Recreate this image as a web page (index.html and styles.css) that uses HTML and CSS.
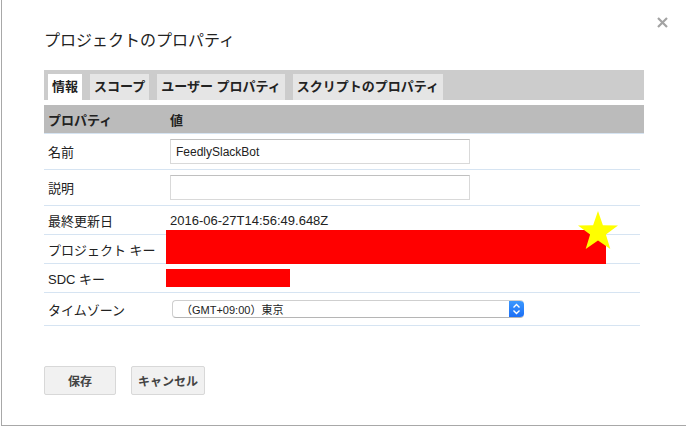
FILE: index.html
```html
<!DOCTYPE html>
<html lang="ja">
<head>
<meta charset="utf-8">
<link rel="stylesheet" href="styles.css">
</head>
<body>
<div class="dialog">
  <button class="close" aria-label="閉じる">
    <svg width="11" height="11" viewBox="0 0 11 11"><path d="M1 1L10 10M10 1L1 10" stroke="#a3a3a3" stroke-width="2.2"/></svg>
  </button>
  <h1 class="title">プロジェクトのプロパティ</h1>
  <div class="tabs">
    <div class="tab active">情報</div>
    <div class="tab">スコープ</div>
    <div class="tab">ユーザー プロパティ</div>
    <div class="tab">スクリプトのプロパティ</div>
  </div>
  <div class="table">
    <div class="head">
      <div class="label">プロパティ</div>
      <div class="value">値</div>
    </div>
    <div class="row tall">
      <div class="label">名前</div>
      <div class="value"><input class="field" type="text" value="FeedlySlackBot"></div>
    </div>
    <div class="row tall">
      <div class="label">説明</div>
      <div class="value"><input class="field" type="text" value=""></div>
    </div>
    <div class="row">
      <div class="label">最終更新日</div>
      <div class="value">2016-06-27T14:56:49.648Z</div>
    </div>
    <div class="row key-row">
      <div class="label">プロジェクト キー</div>
      <div class="value"></div>
      <div class="redact-key"></div>
      <svg class="star" width="42" height="40" viewBox="0 0 42 40"><polygon fill="#ffff00" points="21,0 25.9,14.3 41,14.5 28.9,23.6 33.3,38 21,29.4 8.7,38 13.1,23.6 1,14.5 16.1,14.3"/></svg>
    </div>
    <div class="row">
      <div class="label">SDC キー</div>
      <div class="value"><div class="redact-sdc"></div></div>
    </div>
    <div class="row tz">
      <div class="label">タイムゾーン</div>
      <div class="value">
        <div class="select">
          <span class="select-text">（GMT+09:00）東京</span>
          <span class="stepper">
            <svg width="9" height="12" viewBox="0 0 9 12"><path d="M1.5 4.5L4.5 1.5L7.5 4.5M1.5 7.5L4.5 10.5L7.5 7.5" fill="none" stroke="#fff" stroke-width="1.4"/></svg>
          </span>
        </div>
      </div>
    </div>
  </div>
  <div class="buttons">
    <button class="btn save">保存</button>
    <button class="btn cancel">キャンセル</button>
  </div>
</div>
</body>
</html>
```

FILE: styles.css
```css
html, body {
  margin: 0;
  padding: 0;
  background: #fff;
}
body {
  font-family: "Liberation Sans", "Noto Sans CJK JP", sans-serif;
  color: #222;
  width: 686px;
  height: 428px;
  overflow: hidden;
}
.dialog {
  position: relative;
  box-sizing: border-box;
  margin-left: 1px;
  width: 700px;
  height: 426px;
  border-left: 1px solid #a8a8a8;
  border-bottom: 1px solid #a8a8a8;
  padding: 30px 0 0 42px;
}
.close {
  position: absolute;
  top: 17px;
  left: 655px;
  border: 0;
  background: none;
  padding: 0;
  width: 11px;
  height: 11px;
  line-height: 0;
}
.title {
  margin: 0;
  font-size: 16px;
  font-weight: normal;
  line-height: 22px;
  color: #222;
  height: 22px;
}
.tabs {
  margin-top: 18px;
  width: 600px;
  height: 30px;
  box-sizing: border-box;
  background: #cccccc;
  padding: 4px 4px 0;
  display: flex;
  gap: 8px;
}
.tab {
  height: 26px;
  line-height: 26px;
  padding: 0 4px;
  background: #e5e5e5;
  font-size: 13px;
  font-weight: bold;
  color: #222;
  white-space: nowrap;
}
.tab.active {
  background: #fff;
}
.table {
  margin-top: 5px;
  width: 600px;
}
.head {
  display: flex;
  align-items: center;
  height: 28px;
  background: #bbbbbb;
  border-bottom: 1px solid #d6e4f2;
  font-size: 13px;
  font-weight: bold;
}
.label {
  width: 122px;
  padding-left: 4px;
  flex: none;
  font-size: 13px;
  white-space: nowrap;
}
.value {
  flex: 1;
  font-size: 13px;
}
.row {
  position: relative;
  display: flex;
  align-items: center;
  width: 596px;
  height: 28px;
  border-bottom: 1px solid #d6e4f2;
}
.row.tall {
  height: 35px;
}
.row.tz {
  height: 32px;
}
.field {
  display: block;
  box-sizing: border-box;
  width: 300px;
  height: 25px;
  margin: 0;
  border: 1px solid #d9d9d9;
  border-top-color: #c0c0c0;
  padding: 0 5px;
  font-family: "Liberation Sans", sans-serif;
  font-size: 12px;
  color: #222;
  outline: none;
}
.redact-key {
  position: absolute;
  left: 122px;
  top: -5px;
  width: 440px;
  height: 34px;
  background: #ff0000;
}
.star {
  position: absolute;
  left: 533px;
  top: -24px;
}
.redact-sdc {
  margin-left: -4px;
  width: 124px;
  height: 18px;
  background: #ff0000;
}
.select {
  margin-left: 2px;
  width: 352px;
  height: 18px;
  box-sizing: border-box;
  display: flex;
  align-items: center;
  border: 1px solid #cfcfcf;
  border-bottom-color: #b5b5b5;
  border-right: 0;
  border-radius: 4px;
  background: #fff;
  overflow: hidden;
}
.select-text {
  flex: 1;
  padding-left: 8px;
  font-size: 11px;
  color: #222;
  white-space: nowrap;
}
.stepper {
  flex: none;
  width: 15px;
  height: 18px;
  margin-top: -1px;
  margin-bottom: -1px;
  background: linear-gradient(#3d9bff, #1a6cf5);
  border-radius: 0 4px 4px 0;
  display: flex;
  align-items: center;
  justify-content: center;
}
.buttons {
  margin-top: 40px;
  display: flex;
  gap: 15px;
}
.btn {
  box-sizing: border-box;
  height: 29px;
  margin: 0;
  border: 1px solid #d8d8d8;
  border-radius: 2px;
  background: #f1f1f1;
  font-family: "Liberation Sans", "Noto Sans CJK JP", sans-serif;
  font-size: 12px;
  font-weight: bold;
  color: #444;
  padding: 0;
}
.btn.save {
  width: 72px;
}
.btn.cancel {
  width: 74px;
}
```
